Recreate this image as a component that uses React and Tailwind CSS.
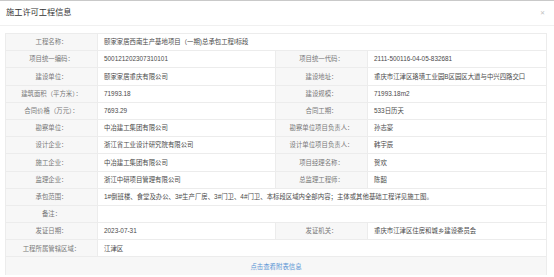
import React from "react";

const rows = [
  { l: "工程名称：", v: "颐家家居西南生产基地项目（一期)总承包工程I标段" },
  { l: "项目统一编码：", v: "500121202307310101", l2: "项目统一代码：", v2: "2111-500116-04-05-832681" },
  { l: "建设单位：", v: "颐家家居重庆有限公司", l2: "建设地址：", v2: "重庆市江津区珞璜工业园B区园区大道与中兴四路交口" },
  { l: "建筑面积（平方米）：", v: "71993.18", l2: "建设规模：", v2: "71993.18m2" },
  { l: "合同价格（万元）：", v: "7693.29", l2: "合同工期：", v2: "533日历天" },
  { l: "勘察单位：", v: "中冶建工集团有限公司", l2: "勘察单位项目负责人：", v2: "孙志豪" },
  { l: "设计企业：", v: "浙江省工业设计研究院有限公司", l2: "设计单位项目负责人：", v2: "韩宇辰" },
  { l: "施工企业：", v: "中冶建工集团有限公司", l2: "项目经理名称：", v2: "贺欢" },
  { l: "监理企业：", v: "浙江中研项目管理有限公司", l2: "总监理工程师：", v2: "陈韶" },
  { l: "承包范围：", v: "1#倒班楼、食堂及办公、3#生产厂房、3#门卫、4#门卫、本标段区域内全部内容；主体或其他基础工程详见施工图。" },
  { l: "备注：", v: "" },
  { l: "发证日期：", v: "2023-07-31", l2: "发证机关：", v2: "重庆市江津区住房和城乡建设委员会" },
  { l: "工程所属管辖区域：", v: "江津区" },
];

function Label({ children }) {
  return (
    <div className="flex items-center justify-center bg-[#f7f7f7] text-[#777] border-r border-b border-[#ececec]">
      {children}
    </div>
  );
}

function Value({ children, span }) {
  return (
    <div
      className={
        "flex items-center pl-[6px] bg-white text-[#4a4a4a] border-r border-b border-[#ececec] whitespace-nowrap overflow-hidden " +
        (span ? "col-span-3" : "")
      }
    >
      {children}
    </div>
  );
}

export default function App() {
  return (
    <div
      className="w-[554px] h-[277px] bg-white overflow-hidden border-t border-[#c9c9c9]"
      style={{ fontFamily: '"Liberation Sans", "Noto Sans CJK SC", sans-serif' }}
    >
      <div className="h-[25px] flex items-center justify-between pl-[6px] pr-[9px] border-b border-[#f0f0f0]">
        <span className="text-[8.2px] text-[#333]">施工许可工程信息</span>
        <span className="text-[6px] text-[#c0c0c0] leading-none">✕</span>
      </div>
      <div className="pl-[5px] pr-[7px] pt-[7px]">
        <div className="grid grid-cols-[92px_178px_92px_1fr] auto-rows-[17.2px] border-l border-t border-[#ececec] text-[6.4px]">
          {rows.map((r, i) =>
            r.l2 ? (
              <React.Fragment key={i}>
                <Label>{r.l}</Label>
                <Value>{r.v}</Value>
                <Label>{r.l2}</Label>
                <Value>{r.v2}</Value>
              </React.Fragment>
            ) : (
              <React.Fragment key={i}>
                <Label>{r.l}</Label>
                <Value span>{r.v}</Value>
              </React.Fragment>
            )
          )}
          <div className="col-span-4 h-[18px] flex items-center justify-center bg-[#f7f7f7] border-r border-[#ececec] text-[#5a95d5]">
            点击查看附表信息
          </div>
        </div>
      </div>
    </div>
  );
}
